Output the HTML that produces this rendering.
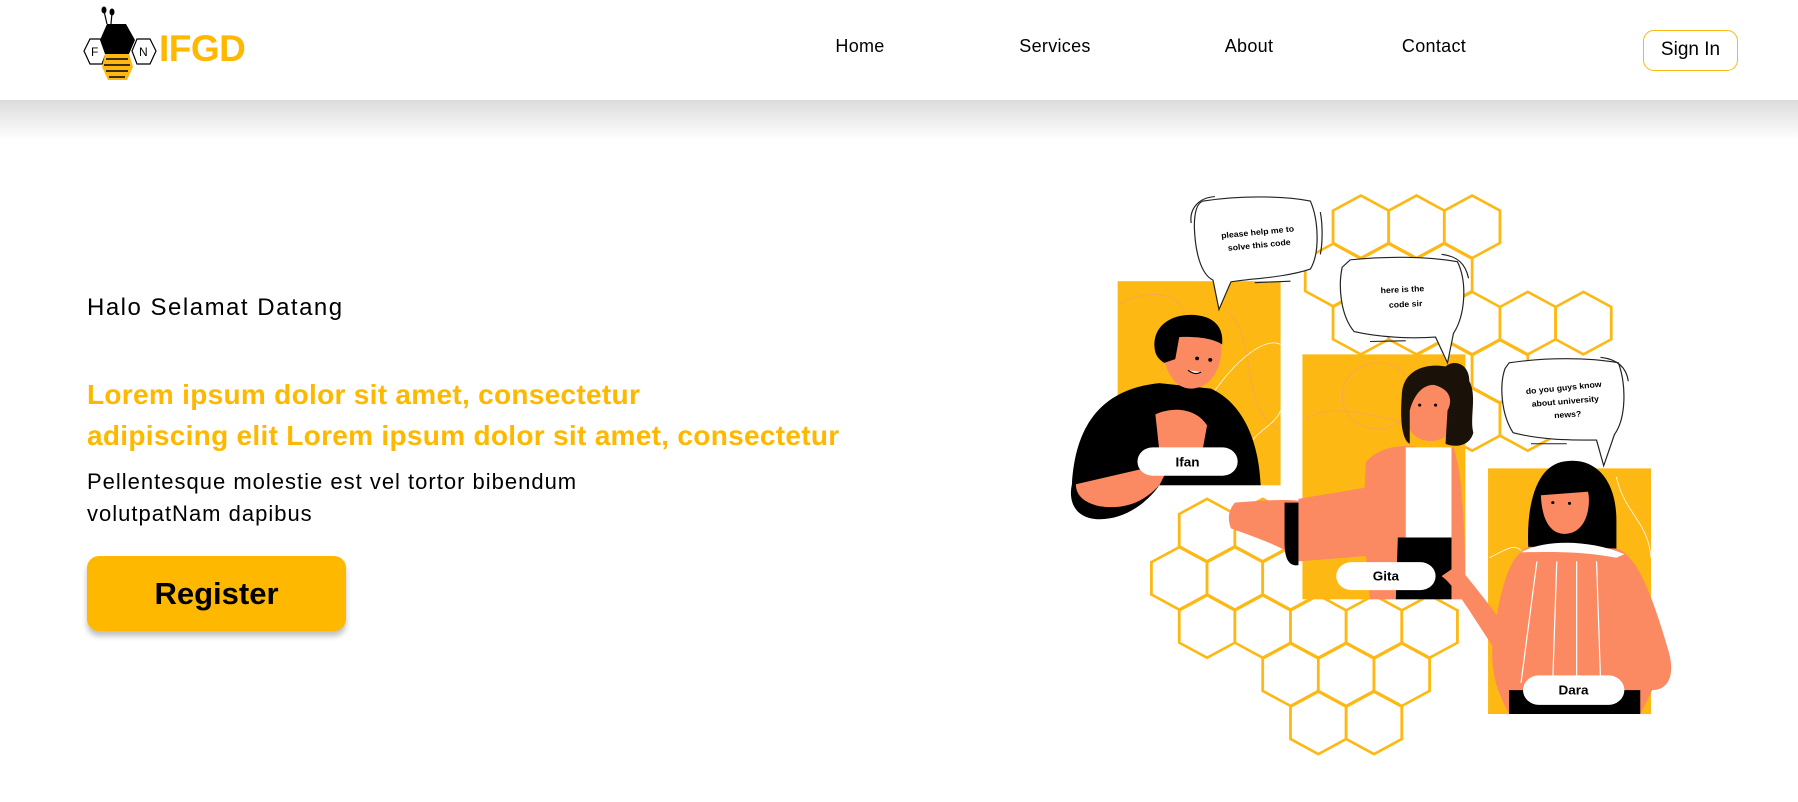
<!DOCTYPE html>
<html><head><meta charset="utf-8"><style>
*{margin:0;padding:0;box-sizing:border-box}
body{width:1798px;height:802px;background:#fff;position:relative;overflow:hidden;font-family:"Liberation Sans",sans-serif;color:#000}
.hdr{position:absolute;left:0;top:0;width:1798px;height:100px;background:#fff}
.shadow{position:absolute;left:0;top:100px;width:1798px;height:40px;background:linear-gradient(#dcdcdc,#fff)}
.nav{position:absolute;top:36px;font-size:18px;transform:translateX(-50%);letter-spacing:0.3px}
.sign{position:absolute;left:1643px;top:30px;width:95px;height:41px;border:1.5px solid #FDB813;border-radius:11px;font-size:19px;text-align:center;line-height:38px}
.t{position:absolute;left:87px;white-space:nowrap}
.btn{position:absolute;left:87px;top:556px;width:259px;height:75px;background:#FFB800;border-radius:12px;box-shadow:0 5px 6px rgba(0,0,0,.25);font-weight:bold;font-size:31px;text-align:center;line-height:75px}
</style></head><body>
<div class="hdr"></div><div class="shadow"></div>
<svg style="position:absolute;left:80px;top:4px" width="80" height="80" viewBox="0 0 80 80">
<line x1="24" y1="7" x2="27" y2="20" stroke="#000" stroke-width="1.2"/><line x1="32" y1="9" x2="31" y2="20" stroke="#000" stroke-width="1.2"/>
<ellipse cx="24" cy="6" rx="2.5" ry="3.5"/><ellipse cx="32" cy="8" rx="2.5" ry="3.5"/>
<polygon points="4,47 10,35 22,35 27,47 22,60 10,60" fill="none" stroke="#000" stroke-width="1.2"/>
<polygon points="52,47 57,35 70,35 76,47 70,60 57,60" fill="none" stroke="#000" stroke-width="1.2"/>
<text x="11" y="52" font-size="12" font-family="Liberation Sans">F</text><text x="59" y="52" font-size="12" font-family="Liberation Sans">N</text>
<polygon points="27,20 46,20 55,36 49,50 25,50 20,36" fill="#000"/>
<polygon points="25,50 49,50 53,63 47,76 28,76 22,63" fill="#FDB813"/>
<g stroke="#000" stroke-width="1.5"><line x1="26" y1="55" x2="48" y2="55"/><line x1="24" y1="61" x2="50" y2="61"/><line x1="26" y1="67" x2="48" y2="67"/><line x1="29" y1="73" x2="45" y2="73"/></g>
</svg>
<div style="position:absolute;left:159px;top:28px;font-size:37px;font-weight:bold;color:#FFB800;letter-spacing:-0.5px">IFGD</div>
<div class="nav" style="left:860px">Home</div>
<div class="nav" style="left:1055px">Services</div>
<div class="nav" style="left:1249px">About</div>
<div class="nav" style="left:1434px">Contact</div>
<div class="sign">Sign In</div>

<div class="t" style="top:294px;font-size:24px;letter-spacing:1.5px">Halo Selamat Datang</div>
<div class="t" style="top:374px;font-size:28px;font-weight:bold;color:#FFB800;line-height:41px;letter-spacing:0.3px">Lorem ipsum dolor sit amet, consectetur<br>adipiscing elit Lorem ipsum dolor sit amet, consectetur</div>
<div class="t" style="top:466px;font-size:22px;line-height:32px;letter-spacing:1px">Pellentesque molestie est vel tortor bibendum<br>volutpatNam dapibus</div>
<div class="btn">Register</div>

<svg style="position:absolute;left:1060px;top:190px" width="620" height="570" viewBox="0 0 1560 1550" preserveAspectRatio="none">
<defs><polygon id="h" points="0,-85 70,-44 70,44 0,85 -70,44 -70,-44" fill="#fff" stroke="#FDB813" stroke-width="7"/></defs>
<g>
<use href="#h" x="757" y="100"/><use href="#h" x="897" y="100"/><use href="#h" x="1037" y="100"/>
<use href="#h" x="687" y="231"/><use href="#h" x="827" y="231"/><use href="#h" x="967" y="231"/>
<use href="#h" x="757" y="362"/><use href="#h" x="897" y="362"/><use href="#h" x="1037" y="362"/><use href="#h" x="1177" y="362"/><use href="#h" x="1317" y="362"/>
<use href="#h" x="967" y="493"/><use href="#h" x="1107" y="493"/>
<use href="#h" x="1037" y="624"/><use href="#h" x="1177" y="624"/>
<use href="#h" x="370" y="925"/><use href="#h" x="510" y="925"/>
<use href="#h" x="300" y="1056"/><use href="#h" x="440" y="1056"/><use href="#h" x="580" y="1056"/>
<use href="#h" x="370" y="1187"/><use href="#h" x="510" y="1187"/><use href="#h" x="650" y="1187"/><use href="#h" x="790" y="1187"/><use href="#h" x="930" y="1187"/>
<use href="#h" x="580" y="1318"/><use href="#h" x="720" y="1318"/><use href="#h" x="860" y="1318"/>
<use href="#h" x="650" y="1449"/><use href="#h" x="790" y="1449"/>
</g>
<rect x="145" y="248" width="410" height="555" fill="#FDB813"/>
<rect x="610" y="447" width="410" height="666" fill="#FDB813"/>
<rect x="1077" y="757" width="410" height="668" fill="#FDB813"/>
<g fill="none" stroke="#F59A7A" stroke-width="2" opacity=".7">
<path d="M150 310 C250 250 350 300 300 400 S200 500 400 480"/><path d="M420 330 C500 400 450 600 550 650"/>
<path d="M620 620 C750 550 900 700 1010 600"/><circle cx="800" cy="560" r="90"/><path d="M620 900 C700 800 800 1000 900 850"/>
</g>
<g fill="none" stroke="#fff" stroke-width="2"><path d="M380 560 C450 450 520 400 555 420"/><path d="M470 700 C500 650 540 640 555 600"/><path d="M1400 780 C1420 880 1480 900 1487 1000"/><path d="M1080 1000 C1120 980 1140 960 1160 980"/></g>
<path d="M30 800 C40 620 120 540 250 525 L380 540 C460 580 500 680 505 803 L250 803 C220 850 160 900 90 895 C40 890 20 850 30 800Z" fill="#000"/>
<path d="M40 800 C120 780 200 760 280 740 L250 803 C210 850 160 870 100 860 C60 850 40 830 40 800Z" fill="#FB8961"/>
<path d="M240 610 C280 590 340 590 370 640 L360 700 L250 710Z" fill="#FB8961"/>
<path d="M255 420 C255 360 300 345 340 350 C390 355 410 390 405 450 C400 500 370 540 330 540 C290 540 265 500 255 420Z" fill="#FB8961"/>
<path d="M238 430 C232 370 280 335 340 340 C390 345 412 375 408 420 C380 400 330 398 300 400 L290 460 L262 470 C248 460 240 450 238 430Z" fill="#000"/>
<circle cx="345" cy="458" r="5"/><circle cx="378" cy="462" r="5"/>
<path d="M322 490 Q340 505 355 495" stroke="#000" stroke-width="3" fill="#fff"/>
<rect x="195" y="700" width="252" height="77" rx="38" fill="#fff"/>
<text x="321" y="752" text-anchor="middle" font-size="34" font-weight="bold" font-family="Liberation Sans">Ifan</text>
<path d="M770 740 C800 700 860 690 900 700 L990 700 C1010 760 1020 900 1020 1113 L780 1113 C770 1000 760 900 770 740Z" fill="#FB8961"/>
<path d="M600 840 L820 800 L830 990 L600 1010Z" fill="#FB8961"/>
<path d="M440 850 C500 845 560 840 600 845 L600 1000 C540 960 480 940 430 920 C420 890 425 870 440 850Z" fill="#FB8961"/>
<path d="M565 850 L600 850 L600 1020 C575 1025 565 1000 565 960Z" fill="#000"/>
<path d="M870 700 L985 700 L985 945 L870 945Z" fill="#fff"/>
<path d="M850 945 L985 945 L985 1113 L845 1113Z" fill="#000"/>
<path d="M870 610 C860 540 890 500 940 500 C990 500 1010 560 1000 620 C990 670 950 690 915 680 C880 670 875 640 870 610Z" fill="#FB8961"/>
<path d="M860 560 C860 490 920 470 970 480 C990 460 1030 470 1030 520 C1050 560 1030 620 1040 660 C1030 700 990 700 970 690 L975 600 C990 570 980 540 940 530 C910 530 890 560 880 600 L880 690 C860 680 855 620 860 560Z" fill="#1a1208"/>
<circle cx="905" cy="585" r="4"/><circle cx="945" cy="585" r="4"/>
<path d="M960 1050 C1000 1080 1060 1200 1120 1290 L1170 1270 C1120 1180 1060 1100 1000 1020Z" fill="#FB8961"/>
<rect x="695" y="1012" width="250" height="76" rx="38" fill="#fff"/>
<text x="820" y="1062" text-anchor="middle" font-size="34" font-weight="bold" font-family="Liberation Sans">Gita</text>
<path d="M1180 1000 C1170 880 1190 760 1260 740 C1340 720 1400 780 1400 900 L1400 1000Z" fill="#000"/>
<path d="M1210 830 C1210 790 1240 780 1270 780 C1320 780 1335 810 1330 860 C1325 910 1300 935 1270 935 C1230 935 1212 890 1210 830Z" fill="#FB8961"/>
<path d="M1200 810 C1220 770 1280 760 1330 790 L1335 820 L1210 830Z" fill="#000"/>
<circle cx="1240" cy="850" r="4"/><circle cx="1282" cy="852" r="4"/>
<path d="M1100 1150 C1120 1040 1140 990 1180 970 L1400 975 C1450 990 1490 1100 1530 1250 C1550 1320 1530 1360 1490 1360 L1460 1425 L1130 1425 C1100 1360 1070 1300 1100 1150Z" fill="#FB8961"/>
<path d="M1160 985 C1220 950 1330 950 1420 990 L1400 1000 C1300 980 1220 985 1160 985Z" fill="#fff"/>
<g stroke="#fff" stroke-width="3"><line x1="1200" y1="1010" x2="1160" y2="1340"/><line x1="1250" y1="1010" x2="1240" y2="1330"/><line x1="1300" y1="1010" x2="1300" y2="1330"/><line x1="1350" y1="1010" x2="1360" y2="1330"/></g>
<path d="M1130 1360 L1460 1360 L1460 1425 L1130 1425Z" fill="#000"/>
<rect x="1165" y="1320" width="255" height="80" rx="40" fill="#fff"/>
<text x="1292" y="1372" text-anchor="middle" font-size="34" font-weight="bold" font-family="Liberation Sans">Dara</text>
<g fill="#fff" stroke="#222" stroke-width="3">
<path d="M360 30 C450 15 560 15 630 30 C650 80 655 170 630 215 C560 240 480 240 430 250 L400 325 L385 245 C355 230 340 170 338 100 C338 60 345 35 360 30Z"/>
<path d="M730 190 C820 180 920 180 1000 195 C1025 250 1020 340 990 390 L975 470 L945 400 C880 405 800 400 740 385 C705 340 700 260 710 210Z"/>
<path d="M1130 470 C1220 455 1330 455 1405 470 C1425 530 1425 620 1395 665 L1368 750 L1350 680 C1280 680 1210 680 1140 660 C1110 610 1105 530 1120 485Z"/>
</g>
<g fill="none" stroke="#222" stroke-width="3"><path d="M330 90 C325 50 350 20 390 18"/><path d="M655 60 C662 100 660 150 655 175"/><path d="M960 175 C1000 180 1020 200 1028 240"/><path d="M1360 455 C1400 460 1425 480 1430 520"/><path d="M490 252 L580 248"/><path d="M780 412 L870 410"/><path d="M1185 690 L1275 690"/></g>
<g font-family="Liberation Sans" font-weight="bold" font-size="22" text-anchor="middle">
<text x="498" y="122" transform="rotate(-6 498 122)">please help me to</text>
<text x="502" y="157" transform="rotate(-6 502 157)">solve this code</text>
<text x="862" y="278" transform="rotate(-3 862 278)">here is the</text>
<text x="870" y="318" transform="rotate(-3 870 318)">code sir</text>
<text x="1268" y="545" transform="rotate(-6 1268 545)">do you guys know</text>
<text x="1272" y="582" transform="rotate(-5 1272 582)">about university</text>
<text x="1278" y="618" transform="rotate(-4 1278 618)">news?</text>
</g>
</svg>
</body></html>
